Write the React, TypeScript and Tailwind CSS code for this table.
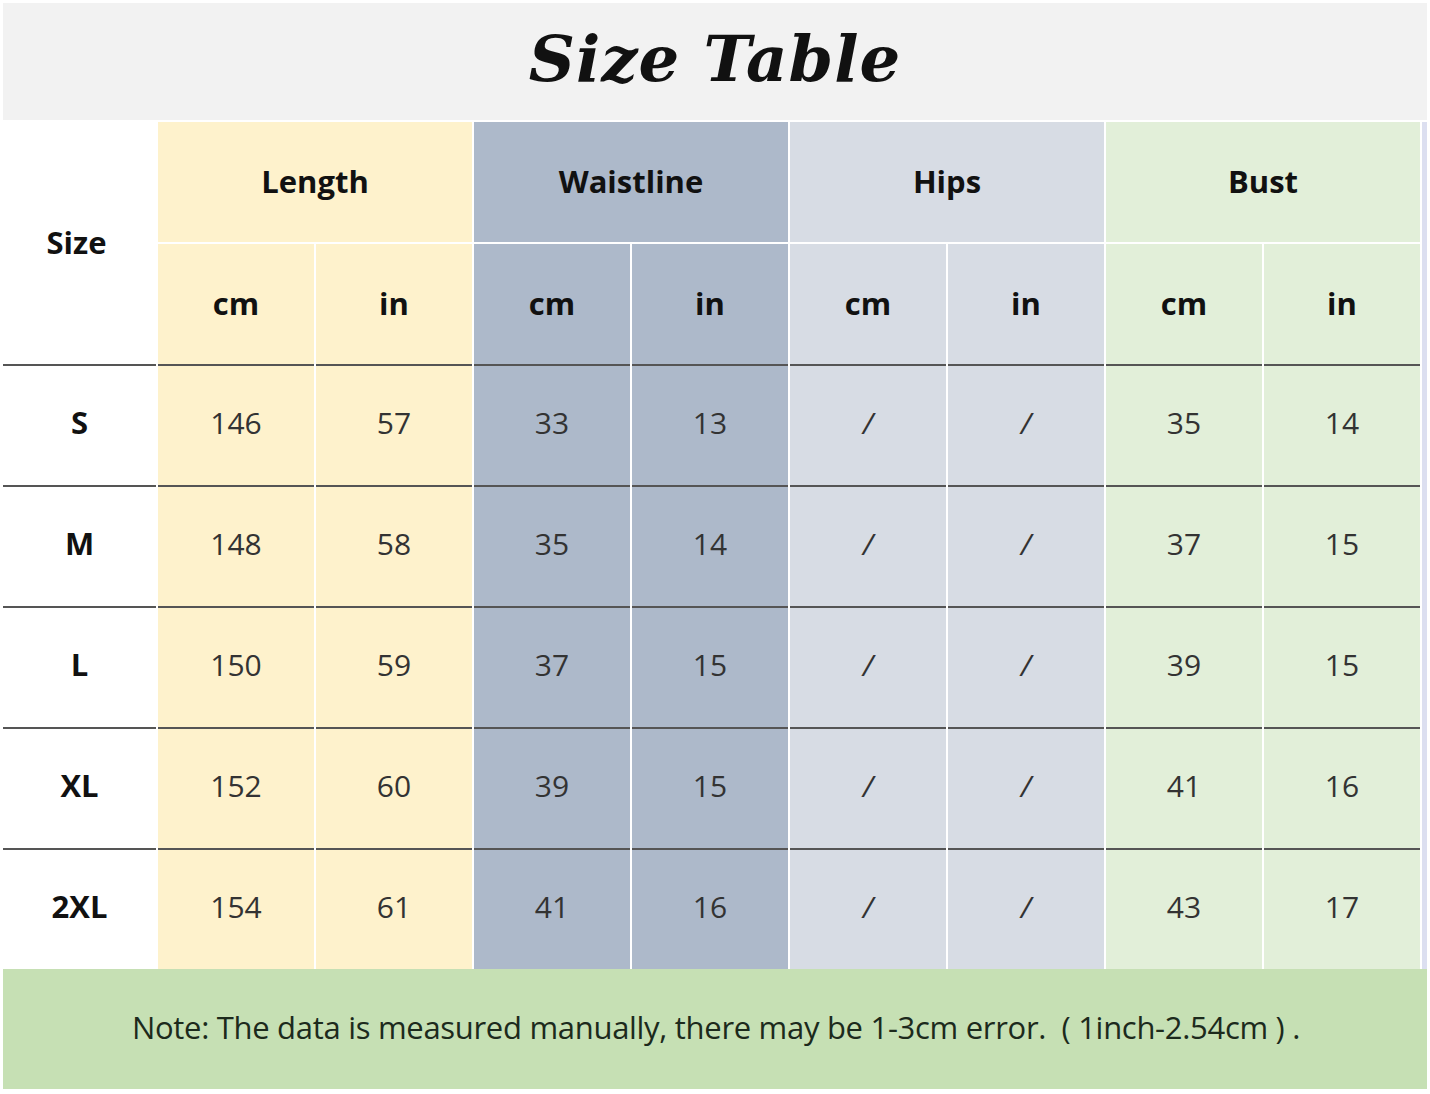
import * as React from "react"

type Group = {
  name: string
  bg: string
}

const groups: Group[] = [
  { name: "Length", bg: "bg-[#fef2cc]" },
  { name: "Waistline", bg: "bg-[#adb9ca]" },
  { name: "Hips", bg: "bg-[#d7dce4]" },
  { name: "Bust", bg: "bg-[#e2efd9]" },
]

const rows: { size: string; values: string[] }[] = [
  { size: "S", values: ["146", "57", "33", "13", "/", "/", "35", "14"] },
  { size: "M", values: ["148", "58", "35", "14", "/", "/", "37", "15"] },
  { size: "L", values: ["150", "59", "37", "15", "/", "/", "39", "15"] },
  { size: "XL", values: ["152", "60", "39", "15", "/", "/", "41", "16"] },
  { size: "2XL", values: ["154", "61", "41", "16", "/", "/", "43", "17"] },
]

const head = "font-['Open_Sans',sans-serif] font-bold text-[31px] text-[#111]"
const cell = "font-['Open_Sans',sans-serif] text-[30px] text-[#333]"

export default function App() {
  return (
    <div className="w-[1430px] h-[1094px] bg-white pt-[3px] pl-[3px]">
      <div className="w-[1424px] h-[117px] bg-[#f2f2f2] flex items-center justify-center">
        <span className="font-['DejaVu_Serif',cursive] italic font-bold text-[64px] text-[#111] tracking-[1px] pb-[6px]">
          Size Table
        </span>
      </div>

      <div className="grid grid-cols-[153px_repeat(8,156px)_5px] gap-x-[2px] mt-[2px]">
        {/* header row 1 */}
        <div className={`row-span-2 flex items-center justify-center ${head} pr-[6px] pb-[2px]`}>Size</div>
        {groups.map((g) => (
          <div key={g.name} className={`col-span-2 h-[120px] ${g.bg} flex items-center justify-center ${head} pb-[2px]`}>
            {g.name}
          </div>
        ))}
        <div className="row-span-7 bg-[#dcdff0]" />

        {/* header row 2 */}
        {groups.map((g) =>
          ["cm", "in"].map((u) => (
            <div key={g.name + u} className={`h-[120px] mt-[2px] ${g.bg} flex items-center justify-center ${head} pb-[2px]`}>
              {u}
            </div>
          ))
        )}

        {/* data rows */}
        {rows.map((r) => (
          <React.Fragment key={r.size}>
            <div className={`h-[121px] border-t-2 border-[#555] bg-white flex items-center justify-center ${head} text-[30px] pb-[6px]`}>
              {r.size}
            </div>
            {r.values.map((v, i) => (
              <div
                key={i}
                className={`h-[121px] border-t-2 border-[#555] ${groups[Math.floor(i / 2)].bg} flex items-center justify-center ${cell} pb-[6px]`}
              >
                {v === "/" ? <span className="italic">/</span> : v}
              </div>
            ))}
          </React.Fragment>
        ))}
      </div>

      <div className="w-[1424px] h-[120px] bg-[#c6e0b4] flex items-center justify-center">
        <span className="font-['Open_Sans',sans-serif] text-[31px] text-[#1c2a1c] tracking-[-0.3px] pl-[2px] pb-[4px]">
          Note: The data is measured manually, there may be 1-3cm error.&nbsp;&nbsp;( 1inch-2.54cm ) .
        </span>
      </div>
    </div>
  )
}
